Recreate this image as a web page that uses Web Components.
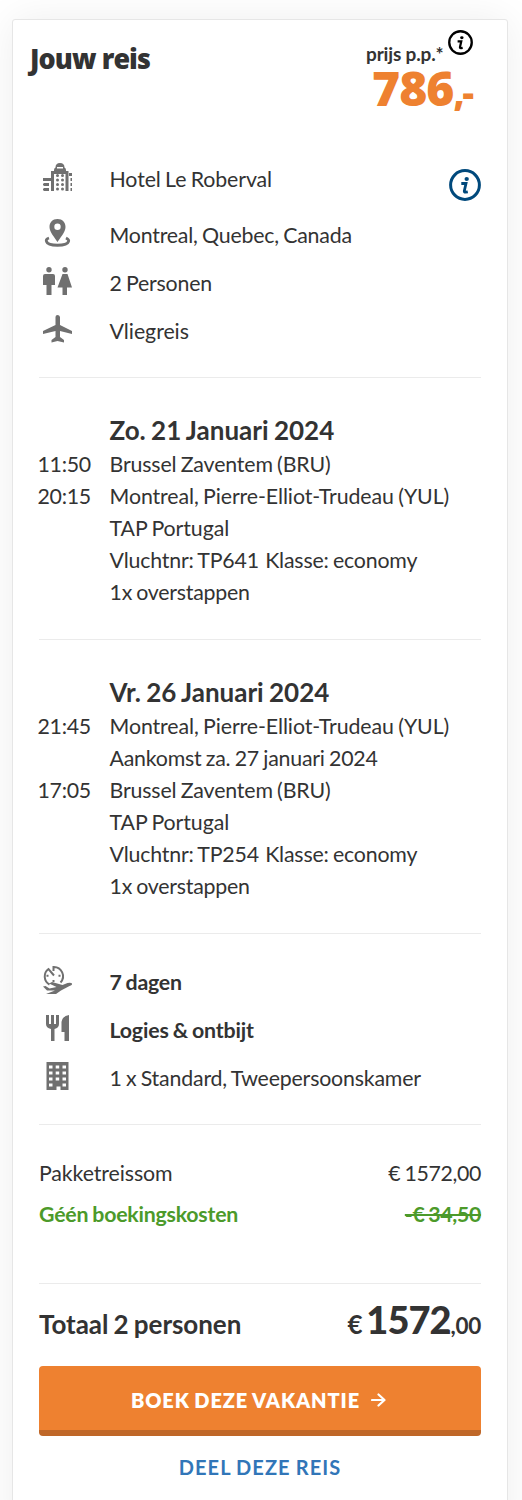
<!DOCTYPE html>
<html lang="nl">
<head>
<meta charset="utf-8">
<title>Jouw reis</title>
<style>
html,body{margin:0;background:#fff}
body{height:1500px;overflow:hidden;font-family:Lato,"Liberation Sans",sans-serif;font-size:21.33px;color:#333;word-spacing:-1px}
</style>
</head>
<body>
<trip-card>
  <trip-header slot="header"></trip-header>
  <trip-section style="--section-height:228px">
    <trip-fact icon="hotel" style="--row-height:56px;letter-spacing:-.1px" info>Hotel Le Roberval</trip-fact>
    <trip-fact icon="pin" style="letter-spacing:-.2px">Montreal, Quebec, Canada</trip-fact>
    <trip-fact icon="people" style="letter-spacing:-.2px">2 Personen</trip-fact>
    <trip-fact icon="plane" style="letter-spacing:-.05px">Vliegreis</trip-fact>
  </trip-section>
  <trip-section style="--section-height:262px;--top:36px">
    <flight-line heading>Zo. 21 Januari 2024</flight-line>
    <flight-line time="11:50" style="letter-spacing:-.15px">Brussel Zaventem (BRU)</flight-line>
    <flight-line time="20:15" style="letter-spacing:-.09px">Montreal, Pierre-Elliot-Trudeau (YUL)</flight-line>
    <flight-line style="letter-spacing:-.08px">TAP Portugal</flight-line>
    <flight-line style="letter-spacing:-.19px">Vluchtnr: TP641&nbsp;<span style="margin-left:2px"></span>Klasse: economy</flight-line>
    <flight-line style="letter-spacing:-.23px">1x overstappen</flight-line>
  </trip-section>
  <trip-section style="--section-height:294px;--top:36px">
    <flight-line heading>Vr. 26 Januari 2024</flight-line>
    <flight-line time="21:45" style="letter-spacing:-.09px">Montreal, Pierre-Elliot-Trudeau (YUL)</flight-line>
    <flight-line style="letter-spacing:-.21px">Aankomst za. 27 januari 2024</flight-line>
    <flight-line time="17:05" style="letter-spacing:-.15px">Brussel Zaventem (BRU)</flight-line>
    <flight-line style="letter-spacing:-.08px">TAP Portugal</flight-line>
    <flight-line style="letter-spacing:-.19px">Vluchtnr: TP254&nbsp;<span style="margin-left:2px"></span>Klasse: economy</flight-line>
    <flight-line style="letter-spacing:-.23px">1x overstappen</flight-line>
  </trip-section>
  <trip-section style="--section-height:191px;--top:24px">
    <trip-fact icon="days" style="letter-spacing:-.25px" bold>7 dagen</trip-fact>
    <trip-fact icon="food" style="letter-spacing:-.16px" bold>Logies &amp; ontbijt</trip-fact>
    <trip-fact icon="room" style="letter-spacing:-.18px">1 x Standard, Tweepersoonskamer</trip-fact>
  </trip-section>
  <trip-section style="--section-height:159px;--top:28px">
    <price-line amount="€ 1572,00">Pakketreissom</price-line>
    <price-line amount="-€ 34,50" free>Géén boekingskosten</price-line>
  </trip-section>
  <trip-total slot="footer"></trip-total>
  <book-actions slot="footer"></book-actions>
</trip-card>
<script>
const ICONS = {
  hotel:'<path fill="none" stroke="currentColor" stroke-width="3" d="M9.500 28V9.500h14.500V28"/><path fill-rule="evenodd" d="M11 7q0-2 1.500-2.500Q12.500 0 17 0t4.500 4.500Q23 5 23 7v2H11zM14 4v1.500h6V4z"/><path d="M0 15h8v3H0zM1 20h5v3H1zM1 25h5v3H1zM0 20.500h6v2H0zM0 25.500h6v2H0zM26 10h3v3h-3zM27.500 15h1.500v3h-1.500zM27.500 20h1.500v3h-1.500zM27.500 25h1.500v3h-1.500z"/><g><circle cx="14.500" cy="12.500" r="1.500"/><circle cx="19.500" cy="12.500" r="1.500"/><circle cx="14.500" cy="17" r="1.500"/><circle cx="19.500" cy="17" r="1.500"/><circle cx="14.500" cy="21.500" r="1.500"/><circle cx="19.500" cy="21.500" r="1.500"/><circle cx="14.500" cy="26" r="1.500"/><circle cx="19.500" cy="26" r="1.500"/></g>',
  pin:'<path fill-rule="evenodd" d="M14.500 0C9.500 0 6.500 3.500 6.500 8C6.500 13 12 19 14.500 23C17 19 22.500 13 22.500 8C22.500 3.500 19.500 0 14.500 0zM14.500 4.500a3.200 3.200 0 1 1 0 6.400a3.200 3.200 0 1 1 0-6.400z"/><path d="M6 19C3 20 3 21.500 3.500 22.500C5 27.500 24 27.500 25.500 22.500C26 21.500 25 20 23 19" fill="none" stroke="currentColor" stroke-width="2.800"/>',
  people:'<circle cx="6" cy="2.700" r="2.700"/><circle cx="22" cy="2.700" r="2.700"/><path d="M2 7h8q2 0 2 2v9H8.500v10H3.500V18H0V9q0-2 2-2zM19.500 7h5l4.500 13.500h-5V28h-4.500v-7.500h-5z"/>',
  plane:'<path d="M12.500 2q0-2 2-2t2.500 2v8l12 6v3L17 16v6l4 3v2.500l-6.500-1.500-6 1.500V25l4-3v-6L0 19v-3l12.500-6z"/>',
  days:'<path fill="none" stroke="currentColor" stroke-width="2" d="M10.500 5V1A9.200 9.200 0 0 1 17.500 16.500M11 9.500L5.500 3A9.200 9.200 0 0 0 6.500 18.500"/><path d="M3.500 8.800h2v2h-2zM15.500 8.800h2v2h-2zM9.500 14h2v2h-2zM0 20.500l2.500-.5 4 2.500 7-1.500-7.500-3.500 3-1.500 10.500 3 5-2q3.500-.8 4.500.5.500 1.500-2.500 2.500L18 24.500l-5 3.500H3l9-3.500H4z"/>',
  food:'<path d="M3 1h3v9h2V1h3v9h2V1h3v9q0 4-4.500 5v12h-3.500V15Q3 14 3 10zM26 1v26h-4.500V18h-3V8q1-6 7.500-7z"/>',
  room:'<path fill-rule="evenodd" d="M3.500 0h22v28h-8v-3.500h-4V28h-10zM6 3.500v3h3.500v-3zM12.700 3.500v3h3.500v-3zM19.500 3.500v3H23v-3zM6 9.500v3h3.500v-3zM12.700 9.500v3h3.500v-3zM19.500 9.500v3H23v-3zM6 15.500v3h3.500v-3zM12.700 15.500v3h3.500v-3zM19.500 15.500v3H23v-3zM6 21.500v3h3.500v-3zM19.500 21.500v3H23v-3z"/>'
};
const define = (name, markup) => customElements.define(name, class extends HTMLElement {
  constructor(){ super(); this.attachShadow({mode:'open'}).innerHTML = markup(this); }
});
define('info-icon', () => `<style>:host{display:block;width:32px;height:32px;color:#00497c}svg{display:block;width:100%;height:100%}</style>
<svg viewBox="0 0 32 32"><circle cx="16" cy="16" r="14.400" fill="none" stroke="currentColor" stroke-width="3"/><ellipse cx="17.700" cy="10" rx="2.200" ry="1.900" fill="currentColor"/><path d="M12.300 14.500h4.700l-1.700 7.500q-.2 1.300 1.300 1.200l2.200-.4" fill="none" stroke="currentColor" stroke-width="2.800"/></svg>`);
define('trip-card', () => `<style>:host{display:block;box-sizing:border-box;margin:19px 0 0 12px;width:496px;height:1520px;padding:0 26px;background:#fff;border:1px solid #e6e6e6;border-radius:3px;box-shadow:0 0 40px rgba(0,0,0,.07)}</style><slot name="header"></slot><slot></slot><slot name="footer"></slot>`);
define('trip-header', () => `<style>
:host{display:flex;justify-content:space-between;height:130px;margin-left:-10px;word-spacing:0}
h1{margin:20px 0 0 1px;font:800 29px/36px "Open Sans",sans-serif;letter-spacing:-1px;transform:scaleX(.93);transform-origin:0 0;white-space:nowrap}
.price{width:115px;padding-top:10px}
.label{display:flex;justify-content:space-between;font-weight:700;font-size:19px;line-height:24px;height:39px;letter-spacing:-.15px}
.label span{padding-top:12px;white-space:nowrap}
info-icon{width:25px;height:25px;color:#000;margin-right:8px}
.amount{font:800 48px/38px "Open Sans",sans-serif;color:#ee8130;padding-left:6px;letter-spacing:-1px;white-space:nowrap}
small{font-size:36px;line-height:1;letter-spacing:-2px}
</style><h1>Jouw reis</h1><div class="price"><div class="label"><span>prijs p.p.*</span><info-icon></info-icon></div><div class="amount">786<small>,-</small></div></div>`);
define('trip-section', () => `<style>:host{display:block;box-sizing:border-box;height:var(--section-height);padding-top:var(--top,5px);border-bottom:1px solid #ebebeb}</style><slot></slot>`);
define('trip-fact', el => `<style>:host{display:flex;box-sizing:border-box;height:var(--row-height,48px);line-height:48px}
svg{width:30px;height:28px;flex:none;margin:8px 36.500px 0 4px;color:#707070;overflow:visible}
.text{flex:1;white-space:nowrap;font-weight:${el.hasAttribute('bold')?700:400}}info-icon{margin-top:14px}</style>
<svg viewBox="0 0 30 28" fill="currentColor">${ICONS[el.getAttribute('icon')]}</svg><div class="text"><slot></slot></div>${el.hasAttribute('info')?'<info-icon></info-icon>':''}`);
define('flight-line', el => `<style>:host{display:flex;line-height:32px;height:${el.hasAttribute('heading')?34:32}px;white-space:nowrap}time{width:72px;flex:none;margin-left:-1.500px;letter-spacing:-.3px}.text{${el.hasAttribute('heading')?'font-weight:700;font-size:26px':''}}</style><time>${el.getAttribute('time')||''}</time><div class="text"><slot></slot></div>`);
define('price-line', el => `<style>:host{display:flex;justify-content:space-between;height:41px;line-height:41px;letter-spacing:${el.hasAttribute('free')?'-.22px':'-.1px'};${el.hasAttribute('free')?'color:#4c9a2a;font-weight:700':''}}.amount{letter-spacing:-.35px;${el.hasAttribute('free')?'text-decoration:line-through':''}}</style><slot></slot><span class="amount">${el.getAttribute('amount')}</span>`);
define('trip-total', () => `<style>:host{display:flex;justify-content:space-between;align-items:baseline;height:82px;line-height:70px;font-weight:700;font-size:26px;white-space:nowrap}.label{letter-spacing:-.06px}.sum{word-spacing:-2.500px}b{font-size:38px;letter-spacing:-1px}small{font-size:22.500px;letter-spacing:-.3px}</style><span class="label">Totaal 2 personen</span><span class="sum">€ <b>1572</b><small>,00</small></span>`);
define('book-actions', () => `<style>:host{display:block;text-align:center;font-weight:700;font-size:20px;letter-spacing:1.100px}
button{display:flex;align-items:center;justify-content:center;gap:11px;box-sizing:border-box;width:100%;height:70px;border:0;border-bottom:6px solid #bf6728;border-radius:4px;background:#ee8130;color:#fff;font:inherit;font-weight:800;letter-spacing:.900px;word-spacing:inherit;padding:4px 3px 0 0}
a{display:block;color:#3176b8;line-height:62px}</style><button>BOEK DEZE VAKANTIE<svg width="15" height="14" viewBox="0 0 15 14" fill="none" stroke="currentColor" stroke-width="2.200" stroke-linecap="round" stroke-linejoin="round"><path d="M1 7h12M7.500 1.500l6 5.500-6 5.500"/></svg></button><a>DEEL DEZE REIS</a>`);
</script>
</body>
</html>
